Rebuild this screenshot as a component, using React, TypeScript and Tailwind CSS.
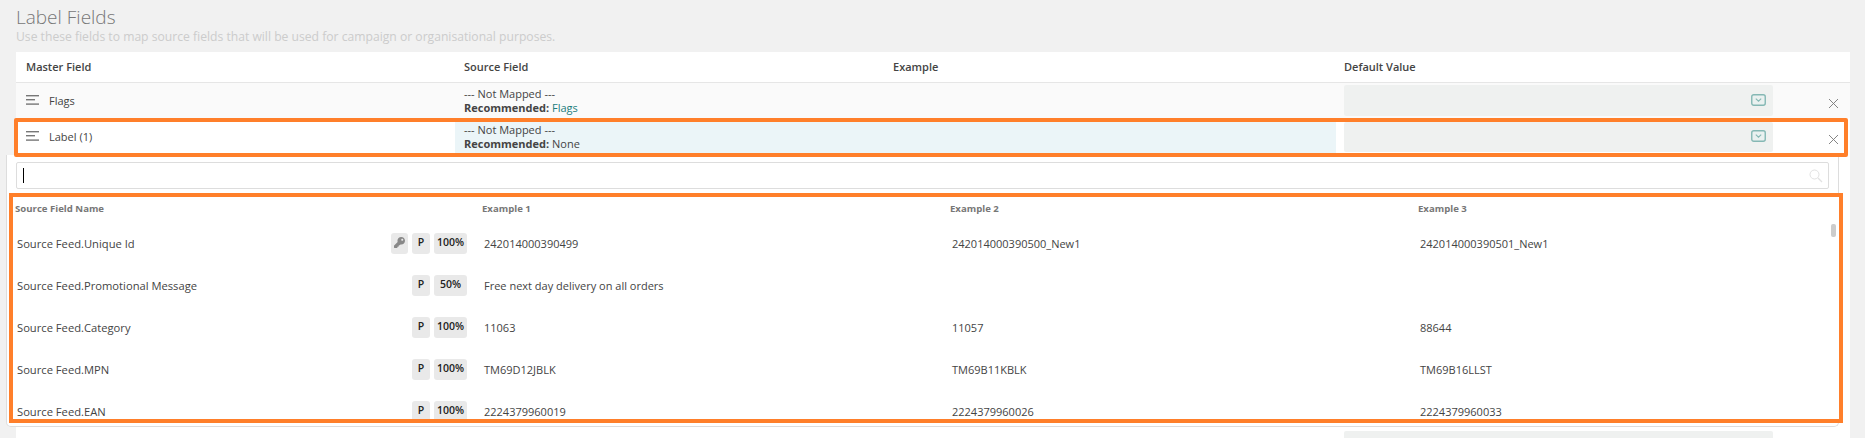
import React from "react";
import { FaKey } from "react-icons/fa";

const rows = [
  { name: "Source Feed.Unique Id", key: true, pct: "100%", e1: "242014000390499", e2: "242014000390500_New1", e3: "242014000390501_New1" },
  { name: "Source Feed.Promotional Message", key: false, pct: "50%", e1: "Free next day delivery on all orders", e2: "", e3: "" },
  { name: "Source Feed.Category", key: false, pct: "100%", e1: "11063", e2: "11057", e3: "88644" },
  { name: "Source Feed.MPN", key: false, pct: "100%", e1: "TM69D12JBLK", e2: "TM69B11KBLK", e3: "TM69B16LLST" },
  { name: "Source Feed.EAN", key: false, pct: "100%", e1: "2224379960019", e2: "2224379960026", e3: "2224379960033" },
];

function Grip() {
  return (
    <svg width="13" height="10" viewBox="0 0 13 10" className="mr-[10px] shrink-0 -mt-[3px]">
      <rect x="0" y="0" width="13" height="1.4" fill="#777" />
      <rect x="0" y="4" width="9" height="1.4" fill="#777" />
      <rect x="0" y="8.4" width="13" height="1.4" fill="#777" />
    </svg>
  );
}

function DropIcon() {
  return (
    <svg width="15" height="12" viewBox="0 0 15 12" fill="none">
      <rect x="0.75" y="0.75" width="13.5" height="10.5" rx="2" stroke="#85b8b4" strokeWidth="1.4" fill="#eaf1f0" />
      <path d="M4.8 4.6 L7.5 7.2 L10.2 4.6" stroke="#85b8b4" strokeWidth="1.1" />
    </svg>
  );
}

function Close() {
  return (
    <svg width="11" height="11" viewBox="0 0 11 11" className="mt-[6px]">
      <path d="M1 1 L10 10 M10 1 L1 10" stroke="#777" strokeWidth="0.9" />
    </svg>
  );
}

function DefaultBox({ h }: { h: string }) {
  return (
    <div className={`${h} mx-2 rounded-[2px] bg-[#eff1f0] flex items-center justify-end pr-[7px]`}>
      <div className="-mt-[1px]">
        <DropIcon />
      </div>
    </div>
  );
}

function Badge({ children, w }: { children: React.ReactNode; w: string }) {
  return (
    <div className={`${w} h-[21px] rounded-[3px] bg-[#e9e9e9] flex items-center justify-center pb-[2px] text-[10.5px] font-semibold text-[#222]`}>
      {children}
    </div>
  );
}

const cols = "grid grid-cols-[439px_431px_450px_445px_69px]";
const listCols = "grid grid-cols-[467px_468px_468px_1fr]";

export default function App() {
  return (
    <div className="h-[438px] w-[1865px] overflow-hidden bg-[#f1f1f1] font-['Open_Sans',sans-serif] text-[11px] text-[#444]">
      <div className="h-[52px] pl-4 pt-[4px]">
        <h1 className="text-[19px] leading-[26px] font-light text-[#777]">Label Fields</h1>
        <p className="text-[12.15px] leading-[14px] text-[#ccc]">
          Use these fields to map source fields that will be used for campaign or organisational purposes.
        </p>
      </div>

      <div className="ml-4 w-[1834px] bg-white">
        <div className={`${cols} h-[31px] items-center border-b border-[#e6e6e6] font-semibold text-[#444]`}>
          <div className="pl-[10px]">Master Field</div>
          <div className="pl-[9px]">Source Field</div>
          <div className="pl-[7px]">Example</div>
          <div className="pl-2">Default Value</div>
          <div />
        </div>

        <div className={`${cols} h-[35px] items-center bg-[#fafafa]`}>
          <div className="pl-[10px] pt-[2px] flex items-center">
            <Grip />
            Flags
          </div>
          <div className="pl-[9px] leading-[14px]">
            <div>--- Not Mapped ---</div>
            <div>
              <span className="font-bold">Recommended:</span> <span className="text-[#1c7d7d]">Flags</span>
            </div>
          </div>
          <div />
          <DefaultBox h="h-[31px]" />
          <div className="flex justify-center pl-[46px] pr-[11px]">
            <Close />
          </div>
        </div>

        <div className={`${cols} relative h-[37px] items-center bg-white`}>
          <div className="pl-[10px] pt-[2px] flex items-center">
            <Grip />
            Label (1)
          </div>
          <div className="col-span-2 h-full bg-[#ebf5f8] pl-[9px] pt-[5px] leading-[14px]">
            <div>--- Not Mapped ---</div>
            <div>
              <span className="font-bold">Recommended:</span> None
            </div>
          </div>
          <DefaultBox h="h-[30px]" />
          <div className="flex justify-center pl-[46px] pr-[11px]">
            <Close />
          </div>
          <div className="absolute -bottom-[2px] -left-[2px] right-[2px] top-0 z-10 border-4 border-[#ff7f2a] rounded-[2px] pointer-events-none" />
        </div>

        <div className="-ml-[10px] mr-[11px] h-[272px] rounded-b-[5px] border border-t-0 border-[#dddddd] bg-white pt-[7px]">
          <div className="mx-[9px] flex h-[27px] items-center justify-between rounded-[2px] border border-[#dddddd] bg-white pl-[6px] pr-[5px]">
            <span className="h-[15px] w-px bg-black" />
            <svg width="14" height="14" viewBox="0 0 14 14" fill="none">
              <circle cx="5.5" cy="5.5" r="4.5" stroke="#e2e2e2" />
              <path d="M9 9 L13 13" stroke="#e2e2e2" strokeWidth="1.3" />
            </svg>
          </div>

          <div className="relative z-10 ml-[2px] -mr-[5px] mt-[4px] h-[230px] overflow-hidden border-4 border-[#ff7f2a] bg-white">
            <div className={`${listCols} h-[26px] pb-[2px] items-center text-[9.6px] font-bold text-[#777]`}>
              <div className="pl-[2px]">Source Field Name</div>
              <div className="pl-[2px]">Example 1</div>
              <div className="pl-[2px]">Example 2</div>
              <div className="pl-[2px]">Example 3</div>
            </div>
            {rows.map((r) => (
              <div key={r.name} className={`${listCols} h-[42px] items-center`}>
                <div className="flex items-center justify-between pl-[4px] pr-[13px] text-[11.2px]">
                  <span>{r.name}</span>
                  <div className="flex gap-1 -mt-[1px]">
                    {r.key && (
                      <Badge w="w-[17px]">
                        <FaKey className="text-[#888]" size={11} />
                      </Badge>
                    )}
                    <Badge w="w-[18px]">P</Badge>
                    <Badge w="w-[33px]">{r.pct}</Badge>
                  </div>
                </div>
                <div className="pl-[4px]">{r.e1}</div>
                <div className="pl-[4px]">{r.e2}</div>
                <div className="pl-[4px]">{r.e3}</div>
              </div>
            ))}
            <div className="absolute right-[3px] top-[27px] h-[13px] w-[5px] rounded-[2px] bg-[#cccccc]" />
          </div>
        </div>

        <div className={`${cols} pt-1`}>
          <div />
          <div />
          <div />
          <DefaultBox h="h-[31px]" />
          <div />
        </div>
      </div>
    </div>
  );
}
